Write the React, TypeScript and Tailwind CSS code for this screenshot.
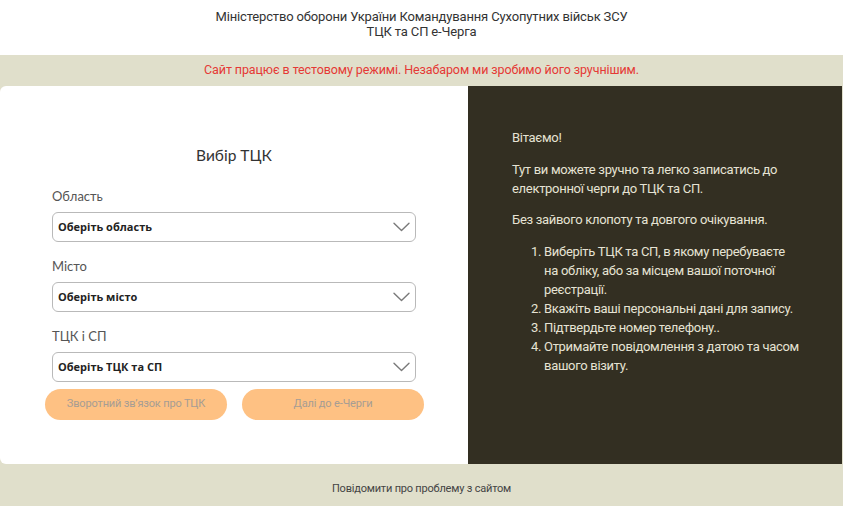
function Chevron() {
  return (
    <svg width="17" height="10" viewBox="0 0 17 10" fill="none" className="mr-[5px]">
      <path d="M1 1.2 L8.5 8.6 L16 1.2" stroke="#7a7a7a" strokeWidth="1.4" strokeLinecap="round" strokeLinejoin="round" />
    </svg>
  );
}

function SelectField({ label, placeholder }: { label: string; placeholder: string }) {
  return (
    <div className="mt-[16px] first:mt-0">
      <div className="font-['Lato',sans-serif] text-[13px] leading-[16px] text-[#555]">{label}</div>
      <div className="mt-[8px] flex h-[30px] items-center justify-between rounded-[6px] border border-[#b9b9b9] bg-white pl-[5px]">
        <span className="font-['Open_Sans',sans-serif] text-[11px] font-bold text-[#222]">{placeholder}</span>
        <Chevron />
      </div>
    </div>
  );
}

export default function App() {
  return (
    <div className="flex h-[506px] w-full flex-col bg-[#e0dfcb] font-['Roboto',sans-serif]">
      <header className="flex h-[55px] flex-col items-center bg-white pt-[10px] text-[13px] leading-[14.5px] tracking-[-0.15px] text-[#333]">
        <div>Міністерство оборони України Командування Сухопутних військ ЗСУ</div>
        <div>ТЦК та СП е-Черга</div>
      </header>

      <div className="flex h-[31px] items-center justify-center text-[12.5px] tracking-[-0.1px] text-[#e53935]">
        Сайт працює в тестовому режимі. Незабаром ми зробимо його зручнішим.
      </div>

      <main className="flex h-[378px] pr-[1px]">
        <section className="flex w-[468px] flex-col rounded-l-[6px] bg-white">
          <h1 className="mt-[59px] text-center font-['Lato',sans-serif] text-[15.5px] leading-[20px] text-[#333]">
            Вибір ТЦК
          </h1>
          <div className="mt-[23px] px-[52px]">
            <SelectField label="Область" placeholder="Оберіть область" />
            <SelectField label="Місто" placeholder="Оберіть місто" />
            <SelectField label="ТЦК і СП" placeholder="Оберіть ТЦК та СП" />
          </div>
          <div className="mt-[7px] flex gap-[15px] pl-[45px] pr-[44px]">
            <button className="h-[31px] flex-1 rounded-full bg-[#fec183] text-[11px] tracking-[-0.15px] text-[#a69d94]">
              Зворотний зв’язок про ТЦК
            </button>
            <button className="h-[31px] flex-1 rounded-full bg-[#fec183] text-[11px] tracking-[-0.15px] text-[#a69d94]">
              Далі до е-Черги
            </button>
          </div>
        </section>

        <section className="flex-1 bg-[#332f22] pl-[44px] pr-[43px] pt-[42px] text-[13px] leading-[19px] tracking-[-0.3px] text-[#e6e3d4]">
          <p className="mb-[13px]">Вітаємо!</p>
          <p className="mb-[12px]">Тут ви можете зручно та легко записатись до електронної черги до ТЦК та СП.</p>
          <p className="mb-[13px]">Без зайвого клопоту та довгого очікування.</p>
          <ol className="list-decimal pl-[32px]">
            <li>Виберіть ТЦК та СП, в якому перебуваєте на обліку, або за місцем вашої поточної реєстрації.</li>
            <li>Вкажіть ваші персональні дані для запису.</li>
            <li>Підтвердьте номер телефону..</li>
            <li>Отримайте повідомлення з датою та часом вашого візиту.</li>
          </ol>
        </section>
      </main>

      <footer className="flex flex-1 items-center justify-center pt-[8px] text-[11px] tracking-[-0.2px] text-[#444]">
        Повідомити про проблему з сайтом
      </footer>
    </div>
  );
}
